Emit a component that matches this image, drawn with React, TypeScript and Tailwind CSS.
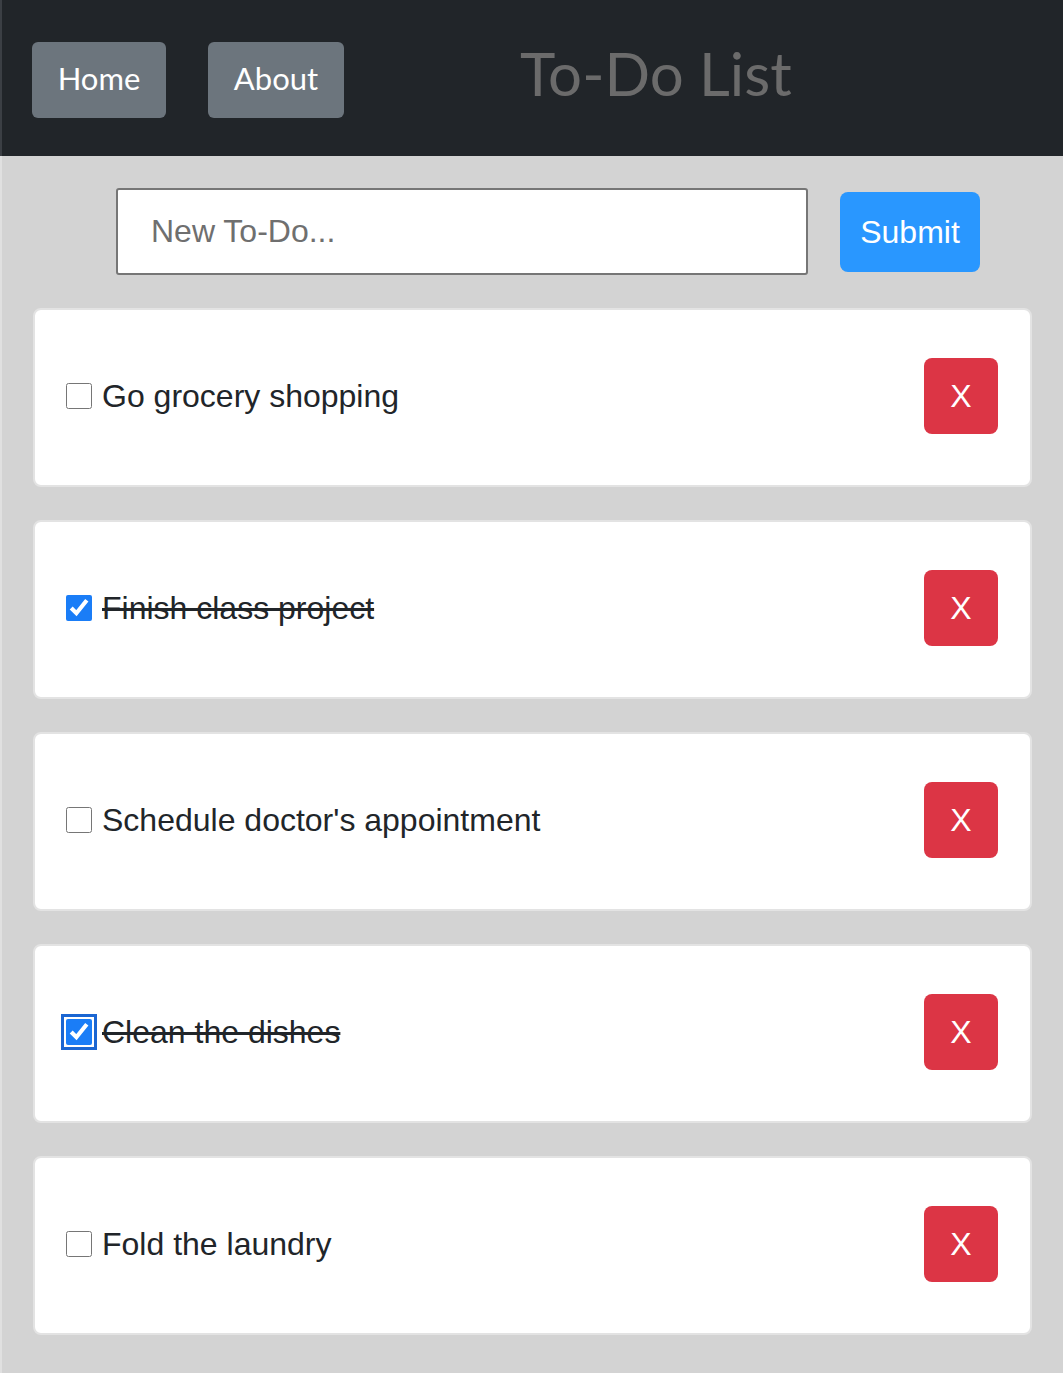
import React from "react";

const todos = [
  { id: 1, text: "Go grocery shopping", done: false },
  { id: 2, text: "Finish class project", done: true },
  { id: 3, text: "Schedule doctor's appointment", done: false },
  { id: 4, text: "Clean the dishes", done: true, focused: true },
  { id: 5, text: "Fold the laundry", done: false },
];

export default function App() {
  return (
    <div className="min-h-[1373px] bg-[#d3d3d3] border-l-2 border-[#e0e0e0]">
      {/* Header */}
      <header className="h-[156px] bg-[#212529] flex items-center pl-[30px] -ml-[2px] border-l-2 border-[#3b3f44]">
        <div className="flex items-center gap-[42px] mt-[4px] font-['Lato',sans-serif]">
          <button className="w-[134px] h-[76px] rounded-[6px] bg-[#6c757d] text-white text-[31px] pb-[3px]">
            Home
          </button>
          <button className="w-[136px] h-[76px] rounded-[6px] bg-[#6c757d] text-white text-[31px] pb-[3px]">
            About
          </button>
        </div>
        <h1 className="ml-[176px] -mt-[10px] text-[#6b6b6b] text-[60px] font-['Lato',sans-serif] leading-none">
          To-Do List
        </h1>
      </header>

      <main className="px-[31px] font-['Liberation_Sans',Arial,sans-serif]">
        {/* Form */}
        <div className="flex items-center gap-[32px] pl-[83px] pt-[32px] pb-[33px]">
          <input
            type="text"
            placeholder="New To-Do..."
            className="w-[692px] h-[87px] bg-white border-2 border-[#767676] rounded-[3px] px-[33px] text-[32px] text-[#212529] placeholder:text-[#6f6f6f] outline-none"
          />
          <button className="w-[140px] h-[80px] rounded-[8px] bg-[#2997ff] text-white text-[32px]">
            Submit
          </button>
        </div>

        {/* List */}
        <div className="flex flex-col gap-[33px]">
          {todos.map((todo) => (
            <div
              key={todo.id}
              className="h-[179px] bg-white border-2 border-[#e3e3e3] rounded-[8px] flex items-center justify-between pl-[31px] pr-[32px] pb-[4px]"
            >
              <label className="flex items-center gap-[10px] text-[32px] text-[#212529]">
                <input
                  type="checkbox"
                  defaultChecked={todo.done}
                  className={
                    todo.focused
                      ? "w-[26px] h-[26px] m-0 accent-[#1a7df7] outline-[3px] outline-solid outline-[#1b66d2] outline-offset-[2px] rounded-[4px]"
                      : "w-[26px] h-[26px] m-0 accent-[#1a7df7]"
                  }
                />
                <span className={todo.done ? "line-through" : ""}>{todo.text}</span>
              </label>
              <button className="w-[74px] h-[76px] rounded-[8px] bg-[#dc3545] text-white text-[32px]">
                X
              </button>
            </div>
          ))}
        </div>
      </main>
    </div>
  );
}
